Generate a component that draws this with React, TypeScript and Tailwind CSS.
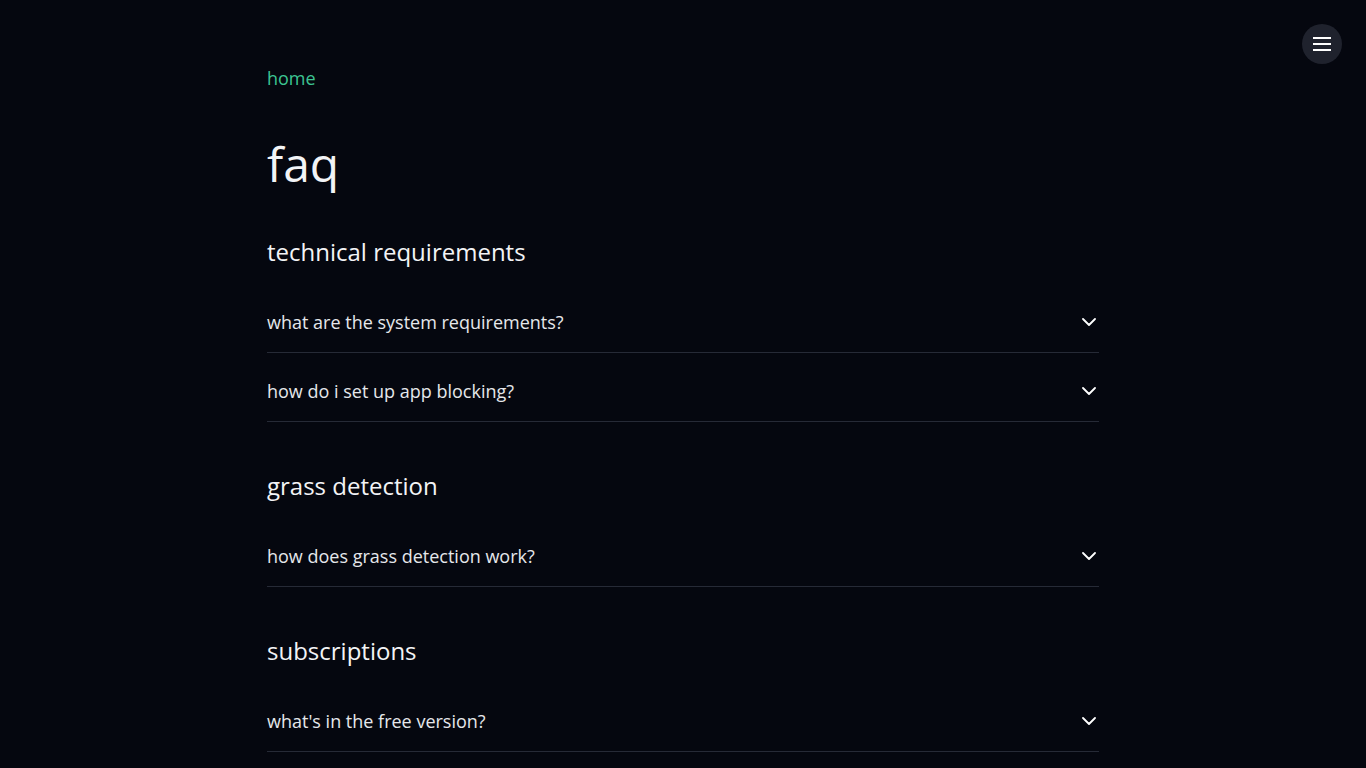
const sections = [
  {
    title: 'technical requirements',
    questions: ['what are the system requirements?', 'how do i set up app blocking?'],
  },
  {
    title: 'grass detection',
    questions: ['how does grass detection work?'],
  },
  {
    title: 'subscriptions',
    questions: ["what's in the free version?"],
  },
];

function Question({ text }: { text: string }) {
  return (
    <button
      type="button"
      className="flex w-full items-center justify-between border-b border-[#262a36] pt-6 pb-4 text-left"
    >
      <span className="text-lg leading-7 text-gray-200">{text}</span>
      <svg
        width="14"
        height="8"
        viewBox="0 0 14 8"
        fill="none"
        stroke="white"
        strokeWidth="1.8"
        strokeLinecap="round"
        strokeLinejoin="round"
        className="mr-[3px]"
      >
        <polyline points="1,1 7,7 13,1" />
      </svg>
    </button>
  );
}

export default function App() {
  return (
    <div
      className="min-h-screen bg-[#05070f] text-white"
      style={{ fontFamily: '"Open Sans", "Liberation Sans", sans-serif' }}
    >
      <button
        type="button"
        className="fixed top-6 right-6 z-40 flex h-10 w-10 items-center justify-center rounded-full bg-[#1f222d]"
      >
        <span className="flex flex-col gap-[4px]">
          <span className="block h-[2px] w-[18px] bg-white" />
          <span className="block h-[2px] w-[18px] bg-white" />
          <span className="block h-[2px] w-[18px] bg-white" />
        </span>
      </button>
      <main className="mx-auto max-w-4xl px-8 pt-16 pb-24">
        <a href="#" className="text-lg leading-7 text-[#3cc492]">
          home
        </a>
        <h1 className="mt-12 text-5xl leading-none text-gray-100">faq</h1>
        <div className="mt-12 space-y-12">
          {sections.map((s) => (
            <section key={s.title}>
              <h2 className="mb-4 text-2xl leading-8 text-gray-100">{s.title}</h2>
              <div>
                {s.questions.map((q) => (
                  <Question key={q} text={q} />
                ))}
              </div>
            </section>
          ))}
        </div>
      </main>
    </div>
  );
}
